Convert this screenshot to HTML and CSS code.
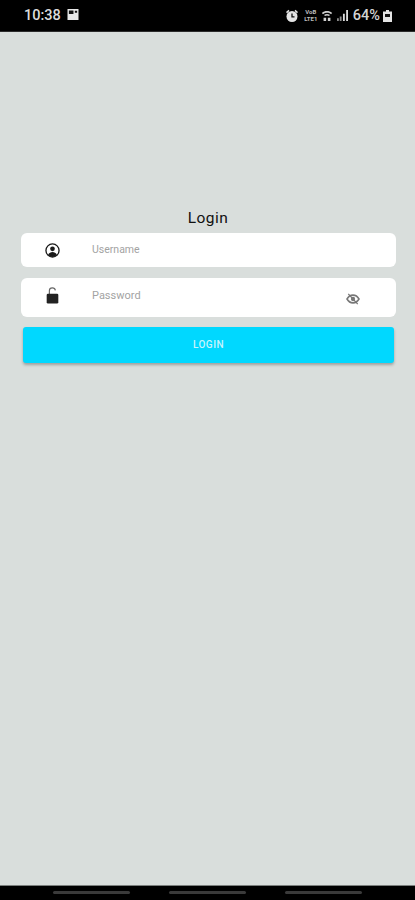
FILE: index.html
```html
<!DOCTYPE html>
<html lang="en">
<head>
<meta charset="utf-8">
<title>Login</title>
<link rel="stylesheet" href="styles.css">
</head>
<body>
<div class="screen">
  <header class="status">
    <div class="status-left">
      <span class="time">10:38</span>
      <svg class="ic-img" viewBox="0 0 12 12"><path fill="#e8e8e8" d="M0 0h12v12H0z"/><path fill="#111" d="M1.500 1.500h5v4h-5zM8 2h2.500v2H8z"/></svg>
    </div>
    <div class="status-right">
      <svg class="ic-alarm" viewBox="0 0 14 14"><path fill="#e4e4e4" d="M1 3 3.500.8l1 1.200L2 4.200zM13 3 10.500.8l-1 1.200L12 4.200z"/><circle cx="7" cy="7.500" r="5.500" fill="#e4e4e4"/><path fill="none" stroke="#111" stroke-width="1.300" d="M7 4.500v3.300h2.500"/></svg>
      <span class="net"><span>VoB</span><span>LTE1</span></span>
      <svg class="ic-wifi" viewBox="0 0 14 13"><path fill="#cfcfcf" d="M1 3.500C4.500.5 9.500.5 13 3.500l-1.300 1.400C8.800 2.600 5.200 2.600 2.300 4.900zM3.500 6c2.200-1.600 4.800-1.600 7 0L9.300 7.200c-1.500-1-3.100-1-4.600 0z"/><path fill="#cfcfcf" d="M3 9h3v4H3zM8 9h3v4H8z"/></svg>
      <svg class="ic-signal" viewBox="0 0 12 12"><path fill="#8c8c8c" d="M0 9h2v3H0zM3 7h2v5H3z"/><path fill="#dcdcdc" d="M6.500 4h2v8h-2zM10 0h2v12h-2z"/></svg>
      <span class="pct">64%</span>
      <svg class="ic-batt" viewBox="0 0 9 12"><path fill="#e4e4e4" d="M3 0h3v1.500h3V12H0V1.500h3z"/><path fill="#111" d="M2 4h5v3H2z"/></svg>
    </div>
  </header>

  <main class="content">
    <h1 class="title">Login</h1>
    <form class="form">
      <label class="field field-user">
        <svg class="field-icon" viewBox="0 0 16 16"><circle cx="8" cy="8" r="7" fill="none" stroke="#1a1a1a" stroke-width="1.400"/><circle cx="8" cy="6.200" r="2.500" fill="#1a1a1a"/><path fill="#1a1a1a" d="M3.300 12.500c1-2.200 2.800-3 4.700-3s3.700.8 4.700 3C11.500 14 9.800 14.800 8 14.800S4.500 14 3.300 12.500z"/></svg>
        <span class="placeholder">Username</span>
      </label>
      <label class="field field-pass">
        <svg class="field-icon lock" viewBox="0 0 14 19"><path fill="none" stroke="#666" stroke-width="1.300" d="M3.500 8V4.200C3.500 2.300 5 1 6.800 1s3.200 1.200 3.400 2.800"/><rect x=".5" y="7.500" width="13" height="11" rx="1.500" fill="#222"/></svg>
        <span class="placeholder">Password</span>
        <svg class="eye" viewBox="0 0 16 14"><path fill="none" stroke="#777" stroke-width="1.800" d="M1 7c1.700-3 4-4.500 7-4.500S13.300 4 15 7c-1.700 3-4 4.500-7 4.500S2.700 10 1 7z"/><circle cx="8" cy="7" r="2.500" fill="#777"/><path stroke="#777" stroke-width="1.500" d="M2.500 1 13.500 13"/></svg>
      </label>
      <button class="login" type="button">LOGIN</button>
    </form>
  </main>

  <footer class="nav">
    <span class="pill"></span>
    <span class="pill"></span>
    <span class="pill"></span>
  </footer>
</div>
</body>
</html>
```
FILE: styles.css
```css
* { box-sizing: border-box; }
html, body { margin: 0; padding: 0; }
body { font-family: Roboto, "Liberation Sans", sans-serif; background: #d9dedc; }
.screen { width: 415px; height: 900px; display: flex; flex-direction: column; overflow: hidden; }

.status { height: 32px; flex: none; background: #000; color: #dcdcdc; display: flex; align-items: center; justify-content: space-between; padding: 0 23px 0 24px; border-bottom: 1px solid #2c2c2c; }
.status-left, .status-right { display: flex; align-items: center; }
.time { font-size: 14.500px; font-weight: 500; }
.ic-img { width: 12px; height: 11px; margin: -2px 0 0 6px; }
.ic-alarm { width: 14px; height: 14px; margin-right: 5px; }
.net { display: flex; flex-direction: column; font-size: 6px; line-height: 6.500px; font-weight: 700; margin-right: 3px; color: #bdbdbd; width: 14px; text-align: center; }
.ic-wifi { width: 12px; height: 13px; margin-right: 4px; }
.ic-signal { width: 11px; height: 11px; margin-right: 5px; }
.pct { font-size: 14.500px; font-weight: 500; color: #d4d4d4; }
.ic-batt { width: 9px; height: 12px; margin-left: 3px; }

.content { flex: 1; display: flex; flex-direction: column; align-items: center; padding-top: 177px; }
.title { margin: 0 0 6px 1px; font-size: 15.500px; line-height: 18px; font-weight: 400; color: #111; letter-spacing: .5px; }
.form { width: 375px; margin-left: 2px; display: flex; flex-direction: column; }
.field { position: relative; display: flex; background: #fff; border-radius: 6px; padding-left: 71px; }
.field-user { height: 34px; align-items: center; margin-bottom: 11px; }
.field-pass { height: 39px; align-items: center; margin-bottom: 10px; }
.placeholder { font-size: 10.500px; color: #a3a3a3; margin-top: -1px; }
.field-pass .placeholder { margin-top: -5px; font-size: 11px; }
.field-icon { position: absolute; left: 24px; top: 10px; width: 15px; height: 15px; }
.lock { left: 25px; top: 9px; width: 13px; height: 17px; }
.eye { position: absolute; left: 325px; top: 15px; width: 14px; height: 12px; }
.login { display: block; width: 371px; height: 36px; margin-left: 2px; border: 0; border-radius: 3px; background: #00d8ff; color: #c9f3fb; font-family: Roboto, "Liberation Sans", sans-serif; font-size: 10px; font-weight: 500; letter-spacing: .5px; padding: 0 0 2px; box-shadow: 0 2px 3px rgba(0,0,0,.28); }

.nav { height: 15px; flex: none; background: #000; border-top: 1px solid #7b7f7d; display: flex; justify-content: center; gap: 39px; padding-top: 5px; }
.pill { width: 77px; height: 3px; border-radius: 2px; background: #3a3a3a; }
```
